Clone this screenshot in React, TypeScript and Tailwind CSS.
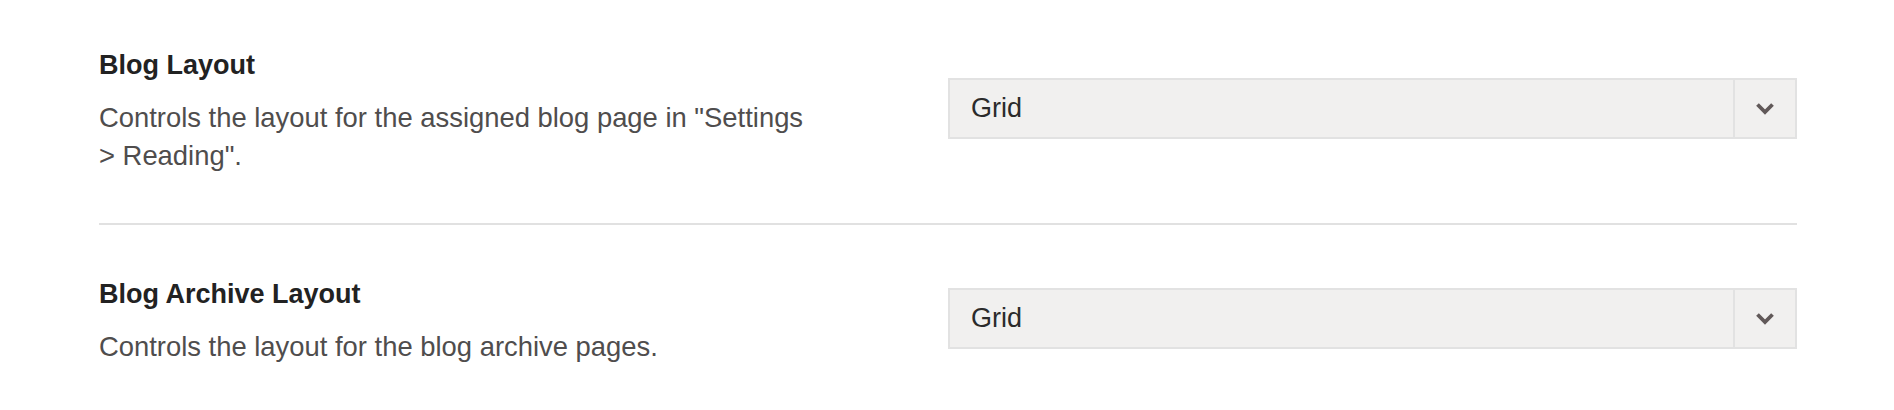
import React from "react";

function Select({ value }: { value: string }) {
  return (
    <div className="flex h-[61px] w-full items-stretch border-2 border-[#e2e2e2] bg-[#f1f0ef]">
      <div className="flex flex-1 items-center pl-[21px] text-[27px] text-[#2b2b2b]">{value}</div>
      <div className="flex w-[62px] items-center justify-center border-l-2 border-[#e2e2e2]">
        <svg width="20" height="13" viewBox="0 0 20 13" fill="none">
          <path d="M2.5 2.5 L10 10 L17.5 2.5" stroke="#615959" strokeWidth="3.8" strokeLinecap="butt" strokeLinejoin="miter" />
        </svg>
      </div>
    </div>
  );
}

function Row({
  title,
  desc,
  className,
}: {
  title: string;
  desc: string;
  className: string;
}) {
  return (
    <div className={"flex items-center " + className}>
      <div className="w-[849px] shrink-0">
        <div className="w-[722px]">
          <div className="text-[27px] font-bold leading-[32px] text-[#222222]">{title}</div>
          <div className="mt-[18px] text-[27.4px] leading-[38px] text-[#4f4d4d]">{desc}</div>
        </div>
      </div>
      <div className="flex-1 -translate-y-[4px]">
        <Select value="Grid" />
      </div>
    </div>
  );
}

export default function App() {
  return (
    <div
      className="min-h-[410px] w-[1894px] bg-white pl-[99px] pr-[97px]"
      style={{ fontFamily: '"Liberation Sans", Arial, sans-serif' }}
    >
      <Row
        title="Blog Layout"
        desc={'Controls the layout for the assigned blog page in "Settings > Reading".'}
        className="pt-[49px] pb-[48px] border-b-2 border-[#e1e1e1]"
      />
      <Row
        title="Blog Archive Layout"
        desc="Controls the layout for the blog archive pages."
        className="pt-[53px]"
      />
    </div>
  );
}
